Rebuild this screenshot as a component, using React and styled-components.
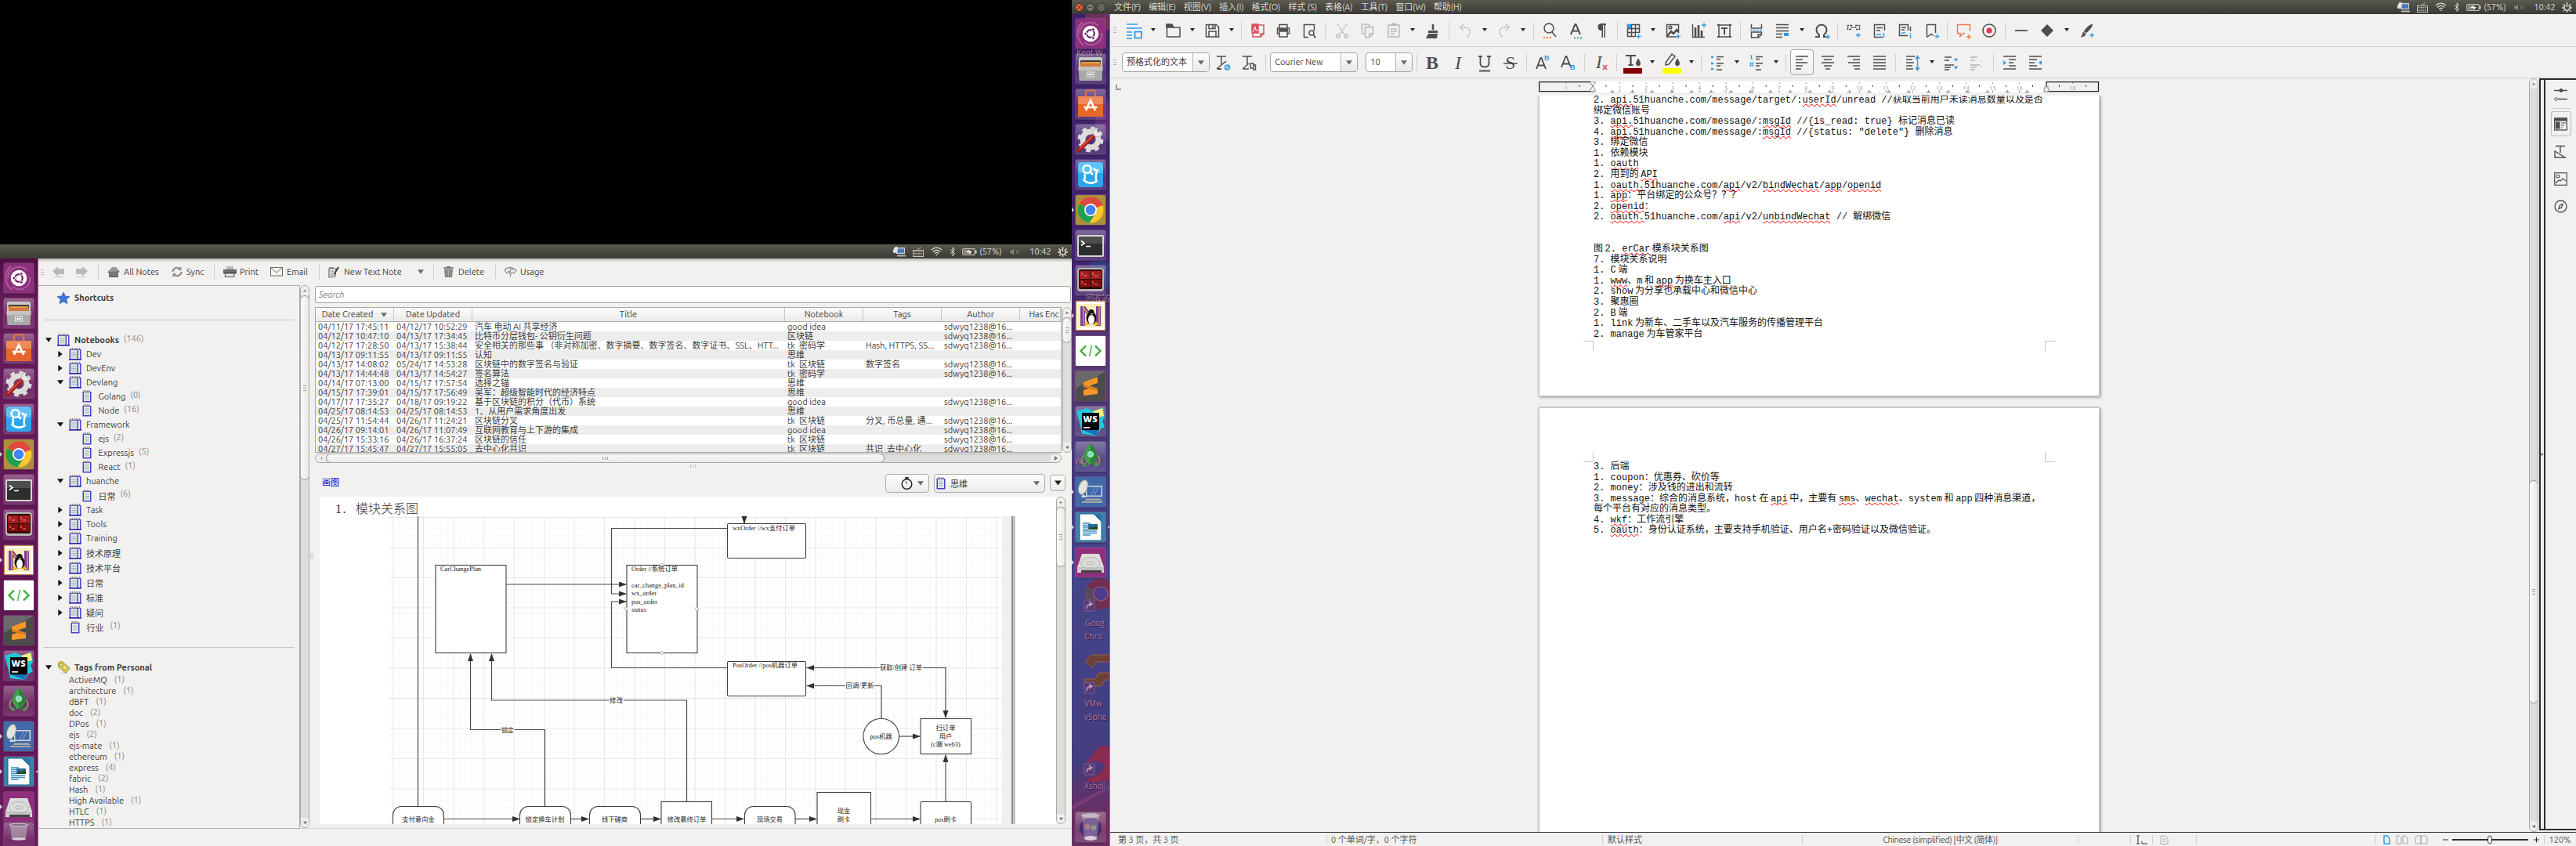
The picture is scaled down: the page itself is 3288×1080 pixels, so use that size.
import React from "react";
import styled, { createGlobalStyle, css } from "styled-components";

const UI = `Ubuntu, "Open Sans", "Noto Sans CJK SC", sans-serif`;
const MONO = `"Liberation Mono", "Noto Sans CJK SC", monospace`;
const INK = "#3c3c3c";
const BG = "#f2f1f0";

const Global = createGlobalStyle`
  html, body { margin: 0; padding: 0; background: #000; }
  * { box-sizing: border-box; }
  svg { display: block; flex: none; }
`;

/* ---------- shell ---------- */
const Root = styled.div`
  width: 3288px; height: 1080px; display: flex; overflow: hidden;
  background: #000; font-family: ${UI}; font-size: 11px; color: ${INK};
`;
const Screen = styled.div`
  width: ${p => p.$w}px; height: 1080px; flex: none; display: flex; flex-direction: column;
  padding-top: ${p => p.$top || 0}px; position: relative; overflow: hidden;
`;
const PanelBar = styled.div`
  height: ${p => p.$h}px; flex: none; display: flex; align-items: center; justify-content: space-between;
  padding: 0 2px 0 3px; color: #dfdbd2; position: relative;
  background: linear-gradient(#5c5b51, #45443e 60%, #3c3b37);
`;
const MenuRow = styled.div`display: flex; align-items: center;`;
const MenuItem = styled.span`margin-right: 10px; white-space: nowrap; line-height: 16px; letter-spacing: -0.1px;`;
const WinDot = styled.span`
  width: 11px; height: 11px; border-radius: 50%; margin-right: 3px; display: grid; place-items: center;
  background: ${p => p.$c}; border: 1px solid #35342f; margin-left: ${p => p.$ml || 0}px;
`;
const Indicators = styled.div`display: flex; align-items: center; height: 18px;`;
const Ind = styled.span`width: ${p => p.$w}px; flex: none; display: flex; align-items: center; justify-content: center; white-space: nowrap;`;
const Body = styled.div`flex: 1; min-height: 0; display: flex;`;

const TrayIcons = () => (
  <Indicators>
    <Ind $w={24}><svg width="16" height="14" viewBox="0 0 16 14"><rect x="4" y="2" width="11" height="8" fill="#ccd3dc" /><rect x="5.5" y="3.3" width="8.5" height="5.5" fill="#4a78b8" /><ellipse cx="3" cy="5" rx="2.6" ry="4.4" fill="#e3e3df" transform="rotate(25 3 5)" /><rect x="5" y="11.5" width="11" height="2" fill="#b9b9b5" /></svg></Ind>
    <Ind $w={24}><svg width="15" height="13" viewBox="0 0 15 13" fill="none" stroke="#c8c4bb"><rect x=".5" y="4.5" width="13" height="8" /><path d="M2 6.5h10M2 8.5h10M2 10.5h10" strokeDasharray="1.6 1" strokeWidth="1.2" /><path d="M6 4c0-3 4-1 4-3.5" strokeWidth=".9" /></svg></Ind>
    <Ind $w={23}><svg width="15" height="12" viewBox="0 0 15 12" fill="none" stroke="#dfdbd2" strokeWidth="1.2"><path d="M.8 4.2c4-4 9.400-4 13.400 0" /><path d="M2.900 6.500c2.800-2.700 6.400-2.700 9.200 0" /><path d="M5 8.600c1.600-1.500 3.400-1.500 5 0" /><circle cx="7.500" cy="10.300" r=".9" fill="#dfdbd2" stroke="none" /></svg></Ind>
    <Ind $w={18}><svg width="8" height="13" viewBox="0 0 8 13" fill="none" stroke="#dfdbd2"><path d="M1 3.500l5.500 5L4 11.500v-10.500l2.500 2.500L1 9" /></svg></Ind>
    <Ind $w={24}><svg width="19" height="9" viewBox="0 0 19 9"><rect x=".7" y=".7" width="15.600" height="7.600" rx="1" fill="none" stroke="#bfbbb2" strokeWidth="1.200" /><rect x="17" y="2.500" width="1.500" height="4" fill="#dfdbd2" /><rect x="2" y="2" width="9" height="5" fill="#8f8c84" /><path d="M5 5l4-3v2h4L9 7.500V5z" fill="#fff" /></svg></Ind>
    <Ind $w={31}>(57%)</Ind>
    <Ind $w={30}><svg width="13" height="9" viewBox="0 0 13 9"><path d="M0 3h2l3-2.500v8L2 6H0z" fill="#85837b" /><path d="M7.500 2.500l4.500 4.500M12 2.500L7.500 7" stroke="#85837b" /></svg></Ind>
    <Ind $w={36}>10:42</Ind>
    <Ind $w={20}><svg width="13" height="13" viewBox="0 0 13 13" fill="none" stroke="#e6e2d9"><path d="M4.300 3.600a3.700 3.700 0 1 0 4.400 0" strokeWidth="1.600" /><path d="M6.500 0v6M1.500 2.500l1.300 1.200M11.500 2.500l-1.300 1.200M0 7h2M11 7h2M2 11.500l1.300-1.300M11 11.500L9.700 10.200M6.500 11v2" strokeWidth="1.400" /></svg></Ind>
  </Indicators>
);

/* ---------- launcher ---------- */
const LauncherCol = styled.div`
  width: 49px; flex: none; display: flex; flex-direction: column; gap: 7px; padding: ${p => p.$pad}px 0 0 5px;
  position: relative; overflow: hidden;
  ${p => p.$desk
    ? css`background: linear-gradient(#3f2168, #42246e 30%, #52386f 45%, #463a80 55%, #45448a 68%, #433c80 90%, #6a2f62 96%); border-right: 1px solid #1e9bf5;`
    : css`background: linear-gradient(#4d0e42, #681b5c 8%, #601653 60%, #681b5c); border-right: 1px solid #9a6c92;`}
`;
const Tile = styled.div`
  width: 38px; height: 38px; flex: none; border-radius: 2px; position: relative;
  background: ${p => p.$bg || "linear-gradient(rgba(255,255,255,.32), rgba(255,255,255,.08) 60%, rgba(255,255,255,.14))"};
  box-shadow: 0 0 0 1px rgba(255,255,255,.13), 0 2px 0 0 rgba(0,0,0,.18);
  margin-top: ${p => p.$mt || 0}px;
`;
const Pip = styled.i`
  position: absolute; top: 16px; width: 0; height: 0; border: 3px solid transparent;
  ${p => p.$right ? css`right: -6px; border-right-color: #e9e2e8;` : css`left: -5px; border-left-color: #d8ccd6;`}
`;
const DeskLabel = styled.span`
  position: absolute; left: ${p => p.$x}px; top: ${p => p.$y}px; font: 10px/16px "Open Sans", "Noto Sans CJK SC", sans-serif;
  color: #b0788f; white-space: pre; text-shadow: 1px 1px 1px #30104a;
`;
const DeskArt = styled.svg`position: absolute; left: 0; top: 0;`;

const T = {
  ubuntu: <><rect width="38" height="38" rx="2" fill="#8d2f7b" /><path d="M5 19c0-14 16-18 24-10M33 18c2 12-12 20-22 12M9 4c-10 8-8 24 2 30" stroke="#c58aba" fill="none" strokeWidth="2" opacity=".5" /><circle cx="19" cy="19" r="10.300" fill="#fff" /><circle cx="19" cy="19" r="4.800" fill="none" stroke="#6a1d5c" strokeWidth="2.200" /><circle cx="12.700" cy="19" r="1.900" fill="#6a1d5c" stroke="#fff" /><circle cx="22.300" cy="13.500" r="1.900" fill="#6a1d5c" stroke="#fff" /><circle cx="22.300" cy="24.500" r="1.900" fill="#6a1d5c" stroke="#fff" /></>,
  files: <><path d="M4 6q0-2 2-2h26q2 0 2 2v10H4z" fill="#c9c9c7" /><rect x="6" y="8" width="26" height="10" fill="#3f3b38" /><rect x="7" y="10" width="24" height="3" fill="#e89a4c" /><rect x="6" y="12" width="26" height="5" fill="#d4793c" /><path d="M3.500 16h31l-1 18h-29z" fill="#a8a8a6" /><path d="M3.500 16h31v5h-31z" fill="#c4c4c2" /><rect x="14.500" y="23" width="9" height="6" fill="none" stroke="#eee" /><rect x="16" y="25" width="6" height="2" fill="#eee" /></>,
  soft: <><path d="M13 9V4q0-3 3-3h6q3 0 3 3v5" fill="none" stroke="#d8704c" strokeWidth="2.500" /><path d="M3 9h32v26H3z" fill="#e8662c" /><path d="M3 9h32v10H3z" fill="#ef8a58" /><path d="M13 27l6-13 6 13M10.500 23h17" stroke="#fff" strokeWidth="2.600" fill="none" /></>,
  settings: <><circle cx="19" cy="19" r="10" fill="none" stroke="#dcdcda" strokeWidth="7" /><circle cx="19" cy="19" r="14.500" fill="none" stroke="#dcdcda" strokeWidth="4" strokeDasharray="5.700 5.690" /><path d="M4 33L24 13" stroke="#a51d18" strokeWidth="5" strokeLinecap="round" /><path d="M5 31L23 13" stroke="#e4584d" strokeWidth="1.500" strokeLinecap="round" /><path d="M22 12q0-7 7-8l-2 4 3 3 4-2q0 7-8 7z" fill="#e8e8e6" stroke="#999" strokeWidth=".6" /></>,
  search: <><rect x="3" y="3" width="32" height="32" rx="4" fill="#2ba6ee" /><rect x="3" y="3" width="32" height="14" rx="4" fill="#5fc2f8" /><circle cx="14.500" cy="12" r="5" fill="none" stroke="#fff" strokeWidth="2.600" /><path d="M18 15.500l4 3.500M11 18q2 4-.500 8 3 3 7 3.500 6 .500 9-2-2-7 1-14-3 .500-4.500-3" fill="none" stroke="#fff" strokeWidth="2.600" /></>,
  chrome: <><rect width="38" height="38" rx="2" fill="#ad8f3c" /><circle cx="19" cy="19" r="16.500" fill="#fbc62f" /><path d="M19 19L4.500 11A16.500 16.500 0 0 1 34.500 13z" fill="#dd4b3e" /><path d="M19 19L4.500 11A16.500 16.500 0 0 0 17.500 35.500L25.500 23z" fill="#20a052" /><path d="M19 2.500a16.500 16.500 0 0 1 15.500 10.500H19z" fill="#dd4b3e" /><circle cx="19" cy="19" r="8" fill="#fff" /><circle cx="19" cy="19" r="6.300" fill="#4285f4" /></>,
  term: <><rect x="2" y="6" width="34" height="28" rx="2" fill="#d6d6d3" /><rect x="4" y="8" width="30" height="24" fill="#2c2f2d" /><path d="M4 8h30v9H4z" fill="#4b4e4c" /><path d="M7 13.500l4 3-4 3M13 20.500h6" stroke="#fff" fill="none" strokeWidth="1.600" /></>,
  termin: <><rect x="2" y="3" width="34" height="30" rx="4" fill="#b9b8b4" /><rect x="4" y="5" width="30" height="25" rx="2" fill="#2b0a0a" /><rect x="5" y="7" width="13.500" height="10" fill="#a91d1d" /><rect x="19.500" y="7" width="13.500" height="10" fill="#a91d1d" /><rect x="5" y="18" width="13.500" height="9.500" fill="#820d0d" /><rect x="19.500" y="18" width="13.500" height="9.500" fill="#820d0d" /><path d="M7 9l2 1.500L7 12M10 13h4M21 9l2 1.500L21 12M24 13h4M7 20l2 1.500L7 23M10 24h4M21 20l2 1.500L21 23M24 24h4" stroke="#e6a3a3" fill="none" strokeWidth=".9" /></>,
  nix: <><rect x=".5" y=".5" width="37" height="37" fill="#fff" stroke="#c87a4a" /><rect x="3" y="4" width="32" height="30" fill="#f8eebc" /><path d="M6 7h6v25H6zM26 7h6v25h-6zM6 7h6l20 25h-6z" fill="#7b3fa6" /><path d="M10 7v24M30 7v24M9 8l20 23" stroke="#d9a929" strokeWidth="1.500" fill="none" /><ellipse cx="20" cy="22" rx="6.500" ry="8" fill="#151515" /><circle cx="20" cy="14.500" r="3.500" fill="#151515" /><ellipse cx="20" cy="24" rx="4" ry="6" fill="#fff" /><path d="M18.500 16h4l-2 2zM13 27l5 3-4 1.500-3-1.500zM27 27l-5 3 4 1.500 3-1.500z" fill="#f3b41b" /></>,
  code: <><rect width="38" height="38" rx="1" fill="#fff" /><path d="M13 12.500L6.500 19l6.500 6.500M25 12.500l6.500 6.500-6.500 6.500" fill="none" stroke="#3fae3a" strokeWidth="2.400" /><path d="M20.500 12l-3 14" stroke="#4cc247" strokeWidth="1.600" /></>,
  sublime: <><rect width="38" height="38" rx="2" fill="#4b4b4b" /><path d="M0 0h38L0 22z" fill="#6a6a6a" /><path d="M10 14l18-7v8l-10 3.500 10 3.500v7L10 31v-7l8-2.500-8-2.500z" fill="#f8962a" /><path d="M10 17l18 5v3l-18-5z" fill="#d97f1e" /></>,
  ws: <><path d="M1 6L14 2l9 4 12-4 2 12-3 4 3 8-5 3-6 8-18-2-3-14z" fill="#1fc8dc" /><path d="M22 6l12-4 2 10-8 2z" fill="#f4f07c" /><path d="M4 28l22 9 4-8z" fill="#1a70b8" /><rect x="8" y="8" width="22" height="22" fill="#050505" /><text x="9.500" y="20" fontFamily="Open Sans" fontSize="11" fontWeight="800" fill="#fff" textLength="18">WS</text><rect x="10" y="26" width="8" height="1.600" fill="#fff" /></>,
  rocket: <><path d="M19 2q10 10 8 19l-5 8h-6l-5-8Q9 12 19 2z" fill="#3f9e48" /><path d="M19 2q10 10 8 19l-5 8h-3z" fill="#2e8138" /><circle cx="19" cy="16" r="3.600" fill="#7de0b8" stroke="#c6f1e0" /><path d="M10 17q-6 8 2 14M28 17q6 8-2 14" stroke="#8a8f5a" fill="none" strokeWidth="2" /><path d="M9 27l5 4M29 27l-5 4" stroke="#3f9e48" strokeWidth="2.500" /></>,
  remote: <><rect width="38" height="38" rx="2" fill="#4269a8" /><rect x="13" y="11" width="21" height="14" fill="#d3d7dc" /><rect x="14.500" y="12.500" width="18" height="11" fill="#3d67a8" /><path d="M20 23l5-10M24 23l5-10" stroke="#89a5cc" /><ellipse cx="9.500" cy="13" rx="5.500" ry="9.500" transform="rotate(20 9.500 13)" fill="#e2e2de" stroke="#999" /><path d="M9 22l-2 4h8z" fill="#dadad6" /><path d="M11 30h23l-3-2.500H14zM8 33h26v-2H8z" fill="#a9a9a6" /></>,
  writer: <><rect width="38" height="38" rx="2" fill="#3d82ac" /><path d="M5 2h18l10 10v24H5z" fill="#fcfcfc" stroke="#1d5f88" strokeWidth="1" /><path d="M23 2h10v10z" fill="#2b75a3" /><path d="M9 14h10M9 16.500h7M9 19h7M9 21.500h7M9 24h18M9 26.500h18M9 29h10" stroke="#3b8fc0" strokeWidth="1.400" /><rect x="16" y="15" width="12" height="7" fill="#2e6d9a" /><path d="M16 22l4-4 3 2 3-3 2 2v3z" fill="#28461f" /></>,
  drive: <><rect width="38" height="38" rx="2" fill="#8f2f7c" /><path d="M8 8h22l6 17v7H2v-7z" fill="#dcdcda" /><path d="M2 25h34v4H2z" fill="#c4c4c2" /><path d="M7 29h26v3H7z" fill="#434341" /><ellipse cx="19" cy="20" rx="12" ry="7.500" fill="none" stroke="#b5b5b3" /><ellipse cx="19" cy="20" rx="5" ry="2" fill="none" stroke="#b5b5b3" /></>,
  trash: <><path d="M8 3h22l-2 32q-9 3-18 0z" fill="#b9b0bc" opacity=".6" /><ellipse cx="19" cy="5" rx="12" ry="3" fill="#8c6f86" stroke="#ddd" /><ellipse cx="19" cy="33" rx="9" ry="2.500" fill="#d9d4da" /></>,
  trash2: <><ellipse cx="19" cy="20" rx="14" ry="13" fill="#4a2a72" /><path d="M12 16q4-2 6 0v6q-3-2-6 0z" fill="#a64a4a" /><path d="M20 16q4 2 6 0v6q-3 2-6 0z" fill="#5b7b55" /><path d="M8 4h22l-3 31H11z" fill="#d8cfe0" opacity=".35" /><ellipse cx="19" cy="4" rx="12" ry="3" fill="#cfc4cc" opacity=".8" /><ellipse cx="19" cy="33" rx="8" ry="3" fill="#e6dfe8" opacity=".85" /></>,
};
const APPS = ["ubuntu", "files", "soft", "settings", "search", "chrome", "term", "termin", "nix", "code", "sublime", "ws", "rocket", "remote", "writer", "drive"];
const RUNNING = ["chrome", "nix", "remote", "writer", "drive"];
const Glyph = ({ n }) => <svg width="38" height="38" viewBox="0 0 38 38">{T[n]}</svg>;

const Launcher = ({ desk, pad }) => (
  <LauncherCol $desk={desk} $pad={pad}>
    {desk && (
      <>
        <DeskArt width="49" height="1062" viewBox="0 0 49 1062">
          <rect x="17" y="0" width="32" height="20" fill="#7d3a55" opacity=".7" />
          <path d="M30 110q18-6 19 10v40q-14 4-19-20z" fill="#6a3584" opacity=".6" />
          <path d="M22 318q14-8 27 2v28H30z" fill="#33407f" opacity=".8" />
          <rect x="0" y="404" width="49" height="90" fill="#6b3d78" opacity=".45" />
          <circle cx="37" cy="740" r="20" fill="#6e3050" />
          <path d="M21 752a20 20 0 0 1-2-22l18 10z" fill="#5a4a5c" />
          <circle cx="37" cy="740" r="9" fill="#4c3a8a" stroke="#8a5a70" strokeWidth="1.500" />
          <path d="M17 826l8-8h24v9H30l-3 8zM20 858h18l4-8h7v-9H34l-4 8H16z" fill="#6c4138" stroke="#936051" />
          <path d="M17 958q14-10 26 2l-8 10-18 8q14 6 32-2v-38q-10-10-20 4z" fill="#8a2b50" />
          <path d="M16 748h13v14H16zM16 853h13v14H16zM16 957h13v14H16z" fill="#5a3a74" stroke="#8c6f9c" strokeWidth=".7" />
          <path d="M19 759q0-6 6-6m-3-3l4 3-4 3M19 864q0-6 6-6m-3-3l4 3-4 3M19 968q0-6 6-6m-3-3l4 3-4 3" stroke="#c6a5c6" fill="none" strokeWidth="1.300" />
          <path d="M0 1010L49 984v4L0 1016z" fill="#8a3f80" opacity=".6" />
        </DeskArt>
        <DeskLabel $x={6} $y={41}>Kent W</DeskLabel>
        <DeskLabel $x={18} $y={354}>回收站</DeskLabel>
        <DeskLabel $x={4} $y={562}>Wor激</DeskLabel>
        <DeskLabel $x={17} $y={769}>Goog</DeskLabel>
        <DeskLabel $x={16} $y={786}>Chro</DeskLabel>
        <DeskLabel $x={16} $y={872}>VMw</DeskLabel>
        <DeskLabel $x={16} $y={889}>vSphe</DeskLabel>
        <DeskLabel $x={16} $y={977}>Xshell</DeskLabel>
      </>
    )}
    {APPS.map(n => (
      <Tile key={n}>
        <Glyph n={n} />
        {RUNNING.includes(n) && <Pip />}
        {n === "writer" && <Pip $right />}
      </Tile>
    ))}
    {desk ? <Tile $mt={293}><Glyph n="trash2" /></Tile> : <Tile $mt={-6}><svg width="38" height="24" viewBox="0 0 38 38" preserveAspectRatio="none">{T.trash}</svg></Tile>}
  </LauncherCol>
);

/* ---------- shared widgets ---------- */
const VTrack = styled.div`
  width: 12px; flex: none; border: 1px solid #a9a7a3; border-radius: 6px; background: #dedddb;
  display: flex; flex-direction: column; align-items: center; justify-content: space-between; overflow: hidden;
`;
const VEnd = styled.div`height: ${p => p.$h || 12}px; width: 100%; flex: none; display: grid; place-items: center; background: #efeeec;`;
const VThumb = styled.div`
  flex: none; width: 12px; height: ${p => p.$h}px; margin-top: ${p => p.$mt || 0}px; border: 1px solid #9c9a96; border-radius: 6px;
  background: linear-gradient(90deg, #fbfbfa, #eae9e7); display: grid; place-items: center; margin-bottom: auto;
`;
const Tri = ({ d = "down", c = "#6b6b6b", s = 6 }) => {
  const P = { down: "M0 1h6L3 5z", up: "M0 5h6L3 1z", right: "M1 0v6l4-3z", left: "M5 0v6L1 3z" };
  return <svg width={s} height={s} viewBox="0 0 6 6"><path d={P[d]} fill={c} /></svg>;
};
const Ridges = ({ v, c = "#9d9b97" }) => (
  <svg width={v ? 9 : 5} height={v ? 5 : 9} viewBox={v ? "0 0 9 5" : "0 0 5 9"} stroke={c}>
    <path d={v ? "M1.500 0v4M4.500 0v4M7.500 0v4" : "M0 1.500h4M0 4.500h4M0 7.500h4"} />
  </svg>
);
const VScroll = ({ thumb, offset }) => (
  <VTrack>
    <VEnd><Tri d="up" s={4} /></VEnd>
    {thumb ? <VThumb $h={thumb} $mt={offset}><Ridges /></VThumb> : null}
    <VEnd><Tri d="down" s={5} /></VEnd>
  </VTrack>
);

/* ---------- NixNote ---------- */
const Nix = styled.div`flex: 1; min-width: 0; background: ${BG}; display: flex; flex-direction: column;`;
const NixToolbar = styled.div`height: 34px; flex: none; display: flex; align-items: center; padding: 0 0 0 3px; background: linear-gradient(#b6b4b0, ${BG} 5px);`;
const TIcon = styled.span`width: ${p => p.$w}px; height: 20px; flex: none; display: grid; place-items: center;`;
const TText = styled.span`width: ${p => p.$w}px; padding-left: ${p => p.$p}px; flex: none; white-space: nowrap; line-height: 16px;`;
const TSep = styled.span`width: 1px; height: 18px; margin: 0 ${p => p.$r}px 0 ${p => p.$l}px; background: #cfcdc9; flex: none;`;
const NixBody = styled.div`height: 694px; flex: none; display: flex; border-bottom: 1px solid #d2d0cd;`;
const SidePanel = styled.div`width: 334px; flex: none; height: 694px; border: 1px solid #aeaca8; border-left: 0; display: flex; flex-direction: column; overflow: hidden; padding-left: 7px;`;
const SideRow = styled.div`
  height: ${p => p.$h || 18}px; flex: none; display: flex; align-items: center; padding-left: ${p => p.$pad || 0}px; white-space: nowrap;
  font-weight: ${p => (p.$b ? 700 : 400)};
`;
const Arrow = styled.span`width: ${p => p.$w || 15}px; flex: none; display: flex; align-items: center;`;
const SideIcon = styled.span`width: ${p => p.$w || 22}px; flex: none;`;
const Count = styled.span`color: #8a8a8a; font-weight: 400; line-height: 12px; margin-left: ${p => p.$ml || 6}px; padding-bottom: ${p => p.$up ?? 5}px;`;
const Rule = styled.div`height: 1px; flex: none; background: #c6c4c1; width: 320px; margin: ${p => p.$t}px 0 ${p => p.$bt}px 0;`;
const VGrip = styled.div`width: 7px; flex: none; display: grid; place-items: center; padding-bottom: 0;`;
const NixMain = styled.div`flex: 1; min-width: 0; display: flex; flex-direction: column; padding-right: 1px;`;
const SearchBox = styled.div`height: 22px; flex: none; margin: 1px 0 0; border: 1px solid #a3a19d; border-radius: 3px; background: #fff; font-style: italic; color: #7c7c7c; padding: 2px 4px; line-height: 16px; width: 965px;`;
const TableZone = styled.div`height: 186px; margin-top: 5px; flex: none; display: flex; gap: 1px; padding-right: 1px;`;
const Table = styled.div`width: 953px; flex: none; border: 1px solid #a9a7a3; background: #fff; overflow: hidden;`;
const Cols = css`display: grid; grid-template-columns: 100px 100px 399px 100px 100px 100px 52px;`;
const THead = styled.div`${Cols} height: 18px; background: linear-gradient(#fcfcfc, #ebeae8); border-bottom: 1px solid #b3b1ad;`;
const TH = styled.div`display: flex; align-items: center; justify-content: center; gap: 10px; border-right: 1px solid #c9c7c3; white-space: nowrap; overflow: hidden; line-height: 17px;`;
const TRow = styled.div`${Cols} height: 12px; background: ${p => (p.$alt ? "#ededed" : "#fff")};`;
const TD = styled.div`padding-left: 3px; line-height: 13px; height: 13px; white-space: pre;`;
const HTrack = styled.div`height: 12px; flex: none; width: 953px; border: 1px solid #a9a7a3; border-radius: 6px; background: #dedddb; display: flex; align-items: center; margin-top: 1px; overflow: hidden;`;
const HEnd = styled.div`width: 13px; height: 12px; display: grid; place-items: center; background: #efeeec; margin-left: ${p => (p.$r ? "auto" : 0)};`;
const HThumb = styled.div`width: 713px; height: 12px; border: 1px solid #9c9a96; border-radius: 6px; background: linear-gradient(#fbfbfa, #eae9e7); display: grid; place-items: center;`;
const HGrip = styled.div`height: 8px; flex: none; display: grid; place-items: center;`;
const NoteHead = styled.div`height: 35px; flex: none; display: flex; align-items: center; padding: 0 7px 0 9px; gap: 6px;`;
const NoteTitle = styled.span`flex: 1; color: #2a2ad6; font-weight: 500; line-height: 16px; padding-bottom: 1px;`;
const Btn = styled.div`width: ${p => p.$w}px; height: ${p => p.$h || 24}px; border: 1px solid #adaba7; border-radius: 4px; background: linear-gradient(#fdfdfd, #ecebe9); display: flex; align-items: center; justify-content: ${p => p.$j || "center"}; padding: ${p => p.$p || 0}; gap: ${p => p.$g || 0}px;`;
const Grow = styled.span`flex: 1;`;
const NoteZone = styled.div`height: 418px; flex: none; display: flex; padding: 0 7px 0 6px;`;
const NoteBody = styled.div`flex: 1; min-width: 0; background: #fff; overflow: hidden;`;
const NoteLine = styled.div`height: 25px; padding: 4px 0 0 20px; font-family: "Liberation Mono", "Noto Sans CJK SC", monospace; font-weight: 300; font-size: 16px; line-height: 24px; white-space: pre; color: #333;`;
const Ordinal = styled.span`font-family: "Liberation Serif", serif; letter-spacing: 1.500px; margin-right: 11px;`;
const DiagramBox = styled.div`padding-left: 88px;`;

const BookStack = () => (
  <svg width="16" height="16" viewBox="0 0 16 16"><rect x=".5" y="2" width="15" height="13.500" fill="#5146cf" /><rect x="0" y="14" width="16" height="1.500" fill="#2f25a4" /><rect x="2" y="3" width="8.500" height="11" fill="#dfe8e4" /><rect x="12" y="3" width="2" height="11" fill="#e8f0ee" /><path d="M3 6h6.500M3 8.500h6.500M3 11h6.500" stroke="#9bb5ab" /><path d="M1.500 1.500h13" stroke="#77777f" strokeWidth="2.400" strokeDasharray="1.300 1" /></svg>
);
const Book = () => (
  <svg width="12" height="16" viewBox="0 0 12 16"><rect x=".5" y="2" width="11" height="13.500" fill="#4a40c8" /><rect x="2" y="3" width="8" height="11" fill="#e2eae7" /><path d="M3 6h6M3 8.500h6M3 11h6" stroke="#9bb5ab" /><path d="M1.500 1.500h9" stroke="#77777f" strokeWidth="2.400" strokeDasharray="1.300 1" /></svg>
);

const TREE = [
  ["Dev", "c"], ["DevEnv", "c"], ["Devlang", "o"], ["Golang", 0], ["Node", 16], ["Framework", "o"], ["ejs", 2], ["Expressjs", 5], ["React", 1],
  ["huanche", "o"], ["日常", 6], ["Task", "c"], ["Tools", "c"], ["Training", "c"], ["技术原理", "c"], ["技术平台", "c"], ["日常", "c"], ["标准", "c"], ["疑问", "c"],
];
const TAGS = [["ActiveMQ", 1], ["architecture", 1], ["dBFT", 1], ["doc", 2], ["DPos", 1], ["ejs", 2], ["ejs-mate", 1], ["ethereum", 1], ["express", 4], ["fabric", 2], ["Hash", 1], ["High Available", 1], ["HTLC", 1], ["HTTPS", 1]];
const NOTES = [
  ["04/11/17 17:45:11", "04/12/17 10:52:29", "汽车 电动 AI 共享经济", "good idea", "", 1],
  ["04/12/17 10:47:10", "04/13/17 17:34:45", "比特币分层钱包- 公钥衍生问题", "区块链", "", 1],
  ["04/12/17 17:28:50", "04/13/17 15:38:44", "安全相关的那些事 （非对称加密、数字摘要、数字签名、数字证书、SSL、HTT...", "tk  密码学", "Hash, HTTPS, SS...", 1],
  ["04/13/17 09:11:55", "04/13/17 09:11:55", "认知", "思维", "", 0],
  ["04/13/17 14:08:02", "05/24/17 14:53:28", "区块链中的数字签名与验证", "tk  区块链", "数字签名", 1],
  ["04/13/17 14:44:48", "04/13/17 14:54:27", "签名算法", "tk  密码学", "", 1],
  ["04/14/17 07:13:00", "04/15/17 17:57:54", "选择之锚", "思维", "", 0],
  ["04/15/17 17:39:01", "04/15/17 17:56:49", "吴军：超级智能时代的经济特点", "思维", "", 0],
  ["04/17/17 17:35:27", "04/18/17 09:19:22", "基于区块链的积分（代币）系统", "good idea", "", 1],
  ["04/25/17 08:14:53", "04/25/17 08:14:53", "1、从用户需求角度出发", "思维", "", 0],
  ["04/25/17 11:54:44", "04/26/17 11:24:21", "区块链分叉", "tk  区块链", "分叉, 币总量, 通...", 1],
  ["04/26/17 09:14:01", "04/26/17 11:07:49", "互联网教育与上下游的集成", "good idea", "", 1],
  ["04/26/17 15:33:16", "04/26/17 16:37:24", "区块链的信任", "tk  区块链", "", 1],
  ["04/27/17 15:45:47", "04/27/17 15:55:05", "去中心化共识", "tk  区块链", "共识  去中心化", 1],
];

const Diagram = () => {
  const L = (d, head) => <path d={d} fill="none" stroke="#4a4a4a" strokeWidth="1.200" markerEnd={head ? "url(#head)" : undefined} />;
  const box = { fill: "#fff", stroke: "#3f3f3f", strokeWidth: 1.1 };
  const Lab = ({ x, y, w, children }) => <><rect x={x - w / 2} y={y - 6} width={w} height={12} fill="#fff" /><text x={x} y={y + 3} textAnchor="middle" textLength={w - 1}>{children}</text></>;
  return (
    <svg width="801" height="393" viewBox="496 659 801 393" fontFamily='"Liberation Serif", "Noto Sans CJK SC", serif' fontSize="8.300" fill="#222">
      <defs>
        <pattern id="minor" width="7.700" height="7.700" patternUnits="userSpaceOnUse" x="501.500" y="698.500"><path d="M0 0h7.700M0 0v7.700" stroke="#f1f1f3" strokeWidth="1" /></pattern>
        <pattern id="major" width="38.500" height="38.500" patternUnits="userSpaceOnUse" x="501.500" y="698.500"><path d="M0 0h38.500M0 0v38.500" stroke="#e4e4e8" strokeWidth="1.600" /></pattern>
        <marker id="head" markerWidth="10" markerHeight="8" refX="9" refY="3.500" orient="auto-start-reverse" markerUnits="userSpaceOnUse"><path d="M0 0L10 3.500 0 7z" fill="#333" /></marker>
      </defs>
      <rect x="496" y="659" width="783" height="393" fill="#fff" />
      <rect x="496" y="659" width="783" height="393" fill="url(#minor)" />
      <rect x="496" y="659" width="783" height="393" fill="url(#major)" />
      <rect x="1279" y="659" width="12" height="393" fill="#f0f0f0" />
      <rect x="1291" y="659" width="2" height="393" fill="#8f8f8f" />
      <rect x="1293" y="659" width="3" height="393" fill="#c4c4c4" />
      {L("M533.500 659V1030")}
      {L("M950 659V668", true)}
      {L("M929 674.500H780.500V758H799", true)}
      {L("M646 746H799", true)}
      {L("M929 852.500H780.500V768H799", true)}
      {L("M695.500 1030V931.500H600.500V835", true)}
      {L("M876.500 1024V894H627.500V835", true)}
      <path d="M1030 852.500H1207V916" fill="none" stroke="#4a4a4a" strokeWidth="1.200" markerStart="url(#head)" markerEnd="url(#head)" />
      {L("M1125 917V875.500H1030", true)}
      {L("M1147 940H1174", true)}
      {L("M1207 1023V964", true)}
      {L("M566 1045.500H663", true)}{L("M728 1045.500H751", true)}{L("M817 1045.500H843", true)}{L("M908 1045.500H949", true)}{L("M1015 1045.500H1042", true)}{L("M1111 1045.500H1174", true)}
      <rect x="556" y="721.500" width="90" height="112" {...box} />
      <rect x="800" y="721.500" width="90" height="112" {...box} />
      <rect x="928.500" y="668.500" width="100" height="44" rx="1.500" {...box} />
      <rect x="928.500" y="844.500" width="100" height="44" rx="1.500" {...box} />
      <circle cx="1124.700" cy="940" r="22.800" {...box} />
      <rect x="1175" y="917.500" width="64.500" height="45" {...box} />
      <rect x="501.500" y="1029.500" width="65" height="40" rx="11" {...box} />
      <rect x="663.500" y="1029.500" width="65" height="40" rx="11" {...box} />
      <rect x="752.500" y="1029.500" width="65" height="40" rx="11" {...box} />
      <rect x="844" y="1023.500" width="64.500" height="40" {...box} />
      <rect x="950.500" y="1029.500" width="64.500" height="40" rx="11" {...box} />
      <rect x="1043" y="1011.500" width="68.500" height="50" {...box} />
      <rect x="1175" y="1023.500" width="64.500" height="40" rx="1.500" {...box} />
      <circle cx="845" cy="721.500" r="2" fill="#fff" stroke="#999" strokeWidth=".7" /><circle cx="845" cy="833.500" r="2" fill="#fff" stroke="#999" strokeWidth=".7" />
      <circle cx="799.500" cy="777" r="2" fill="#fff" stroke="#999" strokeWidth=".7" /><circle cx="889.500" cy="777" r="2" fill="#fff" stroke="#999" strokeWidth=".7" />
      <text x="562" y="729" textLength="52">CarChangePlan</text>
      <text x="806" y="729" textLength="59">Order //系统订单</text>
      <text x="806" y="749.500" textLength="67">car_change_plan_id</text>
      <text x="806" y="760" textLength="32">wx_order</text>
      <text x="806" y="770.500" textLength="33">pos_order</text>
      <text x="806" y="780.500" textLength="19">status</text>
      <text x="935" y="676.500" textLength="80">wxOrder //wx支付订单</text>
      <text x="935" y="852" textLength="83">PosOrder //pos机器订单</text>
      <Lab x={786.500} y={893.500} w={18}>修改</Lab>
      <Lab x={648} y={931.500} w={17}>锁定</Lab>
      <Lab x={1150} y={852} w={55}>获取/创建 订单</Lab>
      <Lab x={1097.500} y={875} w={37}>回调/更新</Lab>
      <g textAnchor="middle">
        <text x="1124.500" y="942.500">pos机器</text>
        <text x="1207" y="932">扫订单</text><text x="1207" y="942.500">用户</text><text x="1207" y="953">(c端 web3)</text>
        <text x="534" y="1048.500">支付意向金</text><text x="695.500" y="1048.500">锁定换车计划</text><text x="784.500" y="1048.500">线下磋商</text>
        <text x="876.500" y="1048.500">修改最终订单</text><text x="982.500" y="1048.500">现场交易</text>
        <text x="1077" y="1038">现金</text><text x="1077" y="1048.500">刷卡</text><text x="1207" y="1048.500">pos刷卡</text>
      </g>
    </svg>
  );
};

const NixNote = () => (
  <Nix>
    <NixToolbar>
      <TIcon $w={5}><Ridges c="#b9b7b3" /></TIcon>
      <TIcon $w={36}><svg width="16" height="16" viewBox="0 0 16 16"><ellipse cx="8" cy="14.500" rx="7" ry="1.300" fill="#dcdbd8" /><path d="M0 7l7-6v3h8v7H7v3z" fill="#b9b8b5" /></svg></TIcon>
      <TIcon $w={22}><svg width="16" height="16" viewBox="0 0 16 16"><ellipse cx="8" cy="14.500" rx="7" ry="1.300" fill="#dcdbd8" /><path d="M16 7L9 1v3H1v7h8v3z" fill="#b9b8b5" /></svg></TIcon>
      <TSep $l={9.5} $r={10} />
      <TIcon $w={18}><svg width="16" height="14" viewBox="0 0 16 14"><path d="M0 7.500L6 1.500h5l5 5.500-2 1v5.500H2V8.500z" fill="#777" /><path d="M1 7l5.500-6H11l4.500 5z" fill="#999" /><path d="M2 13.500h12" stroke="#555" /></svg></TIcon>
      <TText $w={64} $p={4.5}>All Notes</TText>
      <TIcon $w={16}><svg width="14" height="14" viewBox="0 0 14 14" fill="none" stroke="#8d8d8b" strokeWidth="2"><path d="M1.500 7A5.500 5 0 0 1 11 3.500M12.500 7A5.500 5 0 0 1 3 10.500" /><path d="M12.500 0v5h-5zM1.500 14V9h5z" fill="#8d8d8b" stroke="none" /></svg></TIcon>
      <TText $w={36} $p={4.5}>Sync</TText>
      <TSep $l={3.5} $r={10} />
      <TIcon $w={18}><svg width="17" height="14" viewBox="0 0 17 14"><path d="M4 0h9v4H4z" fill="#b9b9b7" /><rect y="4" width="17" height="5.500" rx="1" fill="#5a5a5a" /><path d="M1 6h15" stroke="#888" /><path d="M3 9h11v4.500H2z" fill="#e8e8e6" stroke="#555" /></svg></TIcon>
      <TText $w={42} $p={4}>Print</TText>
      <TIcon $w={18}><svg width="17" height="12" viewBox="0 0 17 12" fill="none" stroke="#6a6a6a"><rect x=".5" y=".5" width="15" height="10.500" fill="#f7f7f6" /><path d="M1 1l7 6 7-6" /></svg></TIcon>
      <TText $w={42} $p={4}>Email</TText>
      <TSep $l={2.5} $r={10} />
      <TIcon $w={16}><svg width="15" height="15" viewBox="0 0 15 15" fill="none" stroke="#666" strokeWidth="1.200"><path d="M2 3h9l-1 10-8 1z" fill="#fafafa" /><path d="M2 1.500l2 1 2-1 2 1M3.500 6h5M3.500 8.500h4M3.500 11h5" /><path d="M14 1L8.500 10" stroke="#444" strokeWidth="2.200" /></svg></TIcon>
      <TText $w={99.5} $p={5.5}>New Text Note</TText>
      <TIcon $w={8}><Tri s={8} /></TIcon>
      <TSep $l={11.5} $r={12} />
      <TIcon $w={13}><svg width="13" height="14" viewBox="0 0 13 14"><path d="M0 2h13M4 .8h5" stroke="#6e6e6e" strokeWidth="1.500" /><path d="M1 3.500h11l-1 10.500H2z" fill="#7f7f7d" /><path d="M4 4.500v8M6.500 4.500v8M9 4.500v8" stroke="#b5b5b3" strokeWidth=".9" /></svg></TIcon>
      <TText $w={53} $p={6.5}>Delete</TText>
      <TSep $l={0} $r={10} />
      <TIcon $w={17}><svg width="17" height="14" viewBox="0 0 17 14" fill="none" stroke="#8a8f98" strokeWidth="1.200"><path d="M4 9L1 5q6-7 15 0l-3 4-2-1.500M4 9l2-1.500M5 7l3-1M8.500 2v4M10 5l2-2" /><circle cx="8.500" cy="8.500" r="1.500" /><path d="M8.500 10v3.500" /></svg></TIcon>
      <TText $w={60} $p={4.5}>Usage</TText>
    </NixToolbar>
    <NixBody>
      <SidePanel>
        <SideRow $b $h={30} $pad={17}><SideIcon><svg width="16" height="15" viewBox="0 0 16 15"><path d="M8 0l2.300 5 5.700.600-4.200 3.700 1.200 5.500L8 12l-5 2.800 1.200-5.500L0 5.600 5.700 5z" fill="#3d77d6" stroke="#27509b" strokeWidth=".6" /></svg></SideIcon>Shortcuts</SideRow>
        <Rule $t={13} $bt={16} />
        <SideRow $b $pad={2}><Arrow><Tri c="#111" s={8} /></Arrow><SideIcon><BookStack /></SideIcon>Notebooks<Count>(146)</Count></SideRow>
        {TREE.map(([name, k], i) => {
          const h = /[\u4e00-\u9fff]/.test(name) ? 19 : 18;
          return typeof k === "number"
            ? <SideRow key={i} $h={h} $pad={49}><SideIcon $w={20.5}><Book /></SideIcon>{name}<Count>({k})</Count></SideRow>
            : <SideRow key={i} $h={h} $pad={17}><Arrow><Tri c="#111" d={k === "o" ? "down" : "right"} s={8} /></Arrow><SideIcon><BookStack /></SideIcon>{name}</SideRow>;
        })}
        <SideRow $h={19} $pad={34}><SideIcon $w={20.5}><Book /></SideIcon>行业<Count $ml={8}>(1)</Count></SideRow>
        <Rule $t={16} $bt={16} />
        <SideRow $b $pad={2}><Arrow><Tri c="#111" s={8} /></Arrow><SideIcon><svg width="17" height="16" viewBox="0 0 17 16"><ellipse cx="9" cy="15" rx="5" ry="1" fill="#d9d8d4" /><path d="M1 3q2-4 6-2l9 8-5 6-9-7z" fill="#d6cb54" stroke="#9c9330" /><circle cx="5" cy="4.500" r="1.600" fill="#fff" stroke="#9c9330" /><path d="M7 8l3-3 3 3-3 3z" fill="#ece59a" stroke="#aaa040" strokeWidth=".7" /></svg></SideIcon>Tags from Personal</SideRow>
        {TAGS.map(([n, c]) => <SideRow key={n} $h={14} $pad={32}>{n}<Count $ml={9} $up={2}>({c})</Count></SideRow>)}
      </SidePanel>
      <VScroll thumb={236} />
      <VGrip><Ridges c="#bdbbb7" /></VGrip>
      <NixMain>
        <SearchBox>Search</SearchBox>
        <TableZone>
          <Table>
            <THead>
              <TH>Date Created <Tri s={8} /></TH><TH>Date Updated</TH><TH>Title</TH><TH>Notebook</TH><TH>Tags</TH><TH>Author</TH>
              <TH>&nbsp;&nbsp;&nbsp;&nbsp;Has Enc</TH>
            </THead>
            {NOTES.map((r, i) => (
              <TRow key={i} $alt={i % 2}>
                <TD>{r[0]}</TD><TD>{r[1]}</TD><TD>{r[2]}</TD><TD>{r[3]}</TD><TD>{r[4]}</TD><TD>{r[5] ? "sdwyq1238@16..." : ""}</TD><TD />
              </TRow>
            ))}
          </Table>
          <VScroll thumb={33} />
        </TableZone>
        <HTrack><HEnd><Tri d="left" s={4} c="#aaa" /></HEnd><HThumb><Ridges v /></HThumb><HEnd $r><Tri d="right" s={6} /></HEnd></HTrack>
        <HGrip><Ridges v c="#c4c2be" /></HGrip>
        <NoteHead>
          <NoteTitle>画图</NoteTitle>
          <Btn $w={56} $j="flex-end" $p="0 6px 0 0" $g={6}><svg width="15" height="16" viewBox="0 0 15 16" fill="none" stroke="#222"><circle cx="7.500" cy="9" r="6.300" strokeWidth="1.500" /><path d="M7.500 0v2.500M5 1h5" strokeWidth="1.600" /><path d="M7.500 9l-1-4" strokeWidth=".8" /></svg><Tri s={8} /></Btn>
          <Btn $w={142} $p="0 6px 0 2px" $g={6}><Book />思维<Grow /><Tri s={8} /></Btn>
          <Btn $w={20} $h={21}><Tri c="#222" s={9} /></Btn>
        </NoteHead>
        <NoteZone>
          <NoteBody>
            <NoteLine><Ordinal>1.</Ordinal>模块关系图</NoteLine>
            <DiagramBox><Diagram /></DiagramBox>
          </NoteBody>
          <VScroll thumb={77} />
        </NoteZone>
      </NixMain>
    </NixBody>
  </Nix>
);

/* ---------- Writer ---------- */
const Writer = styled.div`flex: 1; min-width: 0; background: ${BG}; display: flex; flex-direction: column;`;
const WBar = styled.div`height: ${p => p.$h}px; flex: none; display: flex; align-items: center; border-bottom: 1px solid #d4d2cf; padding-left: 3px;`;
const WBtn = styled.span`
  width: 33px; height: 33px; flex: none; display: grid; place-items: center;
  opacity: ${p => (p.$off ? 0.35 : 1)};
`;
const WBtnOn = styled(WBtn)`border: 1px solid #a5a39f; border-radius: 4px; background: linear-gradient(#fff, #f0efed); width: 30px; margin: 0 1.500px;`;
const WArr = styled.span`width: 16.900px; flex: none; display: grid; place-items: center; padding-bottom: ${p => p.$up || 0}px;`;
const WSep = styled.span`width: 1px; height: 22px; flex: none; margin: 0 3.600px; background: #d3d1ce;`;
const WGap = styled.span`width: ${p => p.$w}px; flex: none;`;
const Combo = styled.div`width: ${p => p.$w}px; height: 25px; flex: none; border: 1px solid #a5a39f; border-radius: 4px; background: #fff; display: flex; align-items: stretch; overflow: hidden;`;
const ComboText = styled.span`flex: 1; padding-left: 5px; line-height: 22px; white-space: nowrap;`;
const ComboBtn = styled.span`width: 21px; border-left: 1px solid #b9b7b3; background: linear-gradient(#fdfdfd, #eae9e7); display: grid; place-items: center;`;

const K = "#4d4d4d", BL = "#2b9be8";
const G = ({ children, w = 24, ...r }) => <svg width={w} height="24" viewBox={`0 0 ${w} 24`} fill="none" stroke={K} strokeWidth="1.500" {...r}>{children}</svg>;
const plus = (x, y, c = BL) => <path d={`M${x - 3} ${y}h6M${x} ${y - 3}v6`} stroke={c} strokeWidth="1.300" />;
const Tx = ({ x, y, s, c = K, f = "Liberation Serif", b, i, children }) => <text x={x} y={y} fontSize={s} fill={c} stroke="none" fontFamily={f} fontWeight={b ? 700 : 400} fontStyle={i ? "italic" : "normal"}>{children}</text>;

const I = {
  new: <G stroke={BL}><path d="M2 4h14M2 9h20M2 14h7M2 18h7M2 22h7" /><rect x="12.500" y="13.500" width="8.500" height="8" strokeWidth="1.800" /></G>,
  open: <G><path d="M4.500 20V5h6l2 3h8.500v12z" /><path d="M4 4h7l2 4H4z" fill={K} /></G>,
  save: <G><path d="M4.500 4.500h13l3 3v12.500h-16z" /><path d="M8 4.500v5h8v-5M8 20v-7h9v7M13 5v4" /></G>,
  pdf: <G stroke="#d6525f"><path d="M12 5h8v11l-4 4H6v-4" /><rect x="5" y="4" width="8" height="11" fill="#d6525f" /><path d="M6 14l3-7 1 5 3-1" stroke="#fff" strokeWidth="1" /><path d="M16 21v-5h5" /></G>,
  print: <G><path d="M7 9V4.500h10V9M7 16H4.500V9h15v7H17" /><rect x="7" y="13" width="10" height="7" /><path d="M6 11h12" strokeWidth="3" /></G>,
  preview: <G><path d="M18.500 12V4.500h-13v16H11M18 20.500h1" /><circle cx="15" cy="15" r="3" /><path d="M17 17l3.500 4" /></G>,
  cut: <G stroke="#b9b9b7"><path d="M6 4l9 13M18 4L9 17" strokeDasharray="2 1" /><circle cx="7" cy="19" r="2" /><circle cx="17" cy="19" r="2" /></G>,
  copy: <G stroke="#b9b9b7"><path d="M8 16H4.500v-12h9V7" /><path d="M8.500 7.500h10v9l-4 4h-6zM18 16h-4v4" /></G>,
  paste: <G stroke="#b9b9b7"><rect x="5" y="5" width="14" height="15" /><path d="M8 5h8M8 10h8M8 13h8M8 16h5" /><path d="M9 4h6" strokeWidth="3" /></G>,
  brush: <G><path d="M13 4v7" strokeWidth="2.600" /><path d="M7 12h12v3H7zM7 16h12l-1 6H4z" fill={K} stroke="none" /></G>,
  undo: <G stroke="#b9b9b7"><path d="M10 4L6 8l4 4M6 8h6q6 0 6 6 0 5-5 6" strokeDasharray="3 1" /></G>,
  redo: <G stroke="#b9b9b7"><path d="M14 4l4 4-4 4M18 8h-6q-6 0-6 6 0 5 5 6" strokeDasharray="3 1" /></G>,
  find: <G><circle cx="11" cy="9" r="6" /><path d="M15 14l5 6" /><path d="M4 21h12" stroke="#f0784f" strokeWidth="2" strokeDasharray="2 2" /></G>,
  spell: <G><path d="M6 17L11.500 4h1L18 17M8 12.500h8" strokeWidth="2" /><path d="M10 21.500h11" stroke="#45a868" strokeWidth="2" strokeDasharray="2 2" /></G>,
  pil: <G><path d="M12 3h6v2h-1v16h-1.500V5H14v16h-1.500v-9q-5 0-5-4.500T12 3z" fill={K} stroke="none" /></G>,
  table: <G><path d="M4.500 4.500h15v15h-15zM4.500 9.500h15M4.500 14.500h15M9.500 4.500v15M14.500 4.500v15" /><rect x="4" y="4" width="5" height="5" fill={BL} stroke="none" /><rect x="15" y="15" width="8" height="8" fill={BG} stroke="none" />{plus(18.5, 19.5)}</G>,
  image: <G><path d="M17 20H4.500V4.500h15V15" /><path d="M5 19l5-6 3 3 4-5 2 3" strokeWidth="2.500" /><circle cx="9" cy="8" r="1.800" />{plus(19, 19.5)}</G>,
  chart: <G><path d="M4.500 4v16M4 20.500h16" /><path d="M8 8v12M12 5v15M16 12v8" strokeWidth="2.600" />{plus(19, 5)}</G>,
  tbox: <G><rect x="5" y="5" width="14" height="15" /><path d="M3 5h3M18 5h3M3 20h3M18 20h3M8 9h8M12 9v8" strokeWidth="2" /></G>,
  pbreak: <G><path d="M5.500 4v5h13V4" /><path d="M4 11.500h16" stroke={BL} strokeDasharray="2.500 1.500" /><path d="M5.500 20.500V14h13v3l-4 4H5.500zM18 17h-4v4" /></G>,
  field: <G><path d="M4 4.500h16M4 8.500h16M4 12.500h16M4 16.500h8M4 20.500h8" /><rect x="14" y="15" width="6" height="4" fill={BL} stroke="none" /></G>,
  omega: <G><path d="M4 20h5v-2.500Q5.500 15 5.500 11 6 5 12 4.500 18 5 18.500 11q0 4-3.500 6.500V20h4" strokeWidth="2" />{plus(20, 20)}</G>,
  link: <G><path d="M10 5.500H4.500v5H10M14 5.500h5.500v5H14M8.500 8h7" strokeDasharray="3 1" />{plus(18, 18)}</G>,
  foot: <G><path d="M16 20.500H5.500V4.500h13V12M8 8.500h8M8 12h5" /><path d="M8 17h6M17.500 15v6" stroke={BL} /></G>,
  endn: <G><path d="M15 18.500H4.500V4.500h11V12M18.500 7v6M7 8h6M7 11h4" /><path d="M7 15h5M18.500 15v1M18.500 17v5" stroke={BL} /></G>,
  bookm: <G><path d="M6.500 20.500v-16h11V15M6.500 20.500l5.500-4 3 2" />{plus(19.5, 19.5)}</G>,
  comment: <G stroke="#f0784f"><path d="M14 15.500h-2l-4 4v-4H4.500v-11h16V13" />{plus(19, 20, "#f0784f")}</G>,
  track: <G><circle cx="12" cy="12" r="8" /><circle cx="12" cy="12" r="3.600" fill="#dc3b4c" stroke="none" /></G>,
  line: <G><path d="M4 12h16" strokeWidth="1.800" /></G>,
  diamond: <G><path d="M12 4l8 8-8 8-8-8z" fill={K} stroke="none" /></G>,
  draw: <G><path d="M20 4q-1 5-8 11l-3-2q5-8 11-9zM8 14l3 2q0 4-6 4 2-1 3-6z" fill={K} stroke={K} strokeWidth=".6" />{plus(19, 18)}</G>,
  sty1: <G><path d="M3 4h12M9 4v10M3 20L15 10" /><path d="M4 20h5" strokeWidth="2" /><circle cx="16.500" cy="18" r="3" stroke={BL} /><path d="M14 20.500l5-5" stroke={BL} /></G>,
  sty2: <G><path d="M3 4h12M9 4v10M3 20l8-7M4 20h7M13 13h4v6h-4zM16 15h3.500v6H16" /></G>,
  bold: <G><Tx x={3} y={20} s={24} b>B</Tx></G>,
  ital: <G><Tx x={7} y={20} s={24} i>I</Tx></G>,
  under: <G><path d="M6.500 4v9q0 4.500 5.500 4.500t5.500-4.500V4M4 4h5M15 4h5M5 22.500h14" strokeWidth="1.800" /></G>,
  strike: <G><Tx x={5.5} y={20} s={23}>S</Tx><path d="M3 13h18" /></G>,
  sup: <G><path d="M4 20L9.500 6h1L16 20M6 15.500h8" strokeWidth="1.800" /><Tx x={14} y={9} s={9} c={BL} f="Liberation Sans" b>B</Tx></G>,
  sub: <G><path d="M3 18L8.500 4h1L15 18M5 13.500h8" strokeWidth="1.800" /><Tx x={14} y={21} s={9} c={BL} f="Liberation Sans" b>B</Tx></G>,
  clear: <G><Tx x={6} y={19} s={23} i>I</Tx><path d="M15 15l5 6M20 15l-5 6" stroke="#e05263" strokeWidth="1.800" /></G>,
  fcol: <svg width="26" height="30" viewBox="0 0 26 30" fill="none" stroke={K}><path d="M4 6h13M10.500 6v12M7.500 18h6" strokeWidth="2.200" /><path d="M20 10q5 8 0 9-5-1 0-9z" fill={K} /><rect x="1" y="22" width="24" height="7" fill="#850000" stroke="none" /></svg>,
  hcol: <svg width="26" height="30" viewBox="0 0 26 30" fill="none" stroke={K}><path d="M5 15L13 4l4 3-8 10-4 1z" strokeWidth="1.500" /><path d="M20 10q5 8 0 9-5-1 0-9z" fill={K} /><rect x="1" y="22" width="24" height="7" fill="#ffff00" stroke="none" /></svg>,
  bul: <G><path d="M11 4.500h9M11 7.500h5M11 13h9M11 16h5M11 21h7" /><path d="M4 5h3M4 13h3M4 20h3" stroke={BL} strokeWidth="2.500" /></G>,
  num: <G><path d="M11 4.500h9M11 7.500h5M11 13h9M11 16h5M11 21h7" /><path d="M5.500 3v4M4 3h3M4 7h3M4.500 12v4M7 12v4M3.500 12h5M3.500 16h5" stroke={BL} strokeWidth="1.200" /></G>,
  al: <G><path d="M4 4h16M4 8h9M4 12h15M4 16h9M4 20h7" /></G>,
  ac: <G><path d="M4 4h16M7 8h10M4 12h16M7 16h10M9 20h6" /></G>,
  ar: <G><path d="M4 4h16M11 8h9M5 12h15M11 16h9M13 20h7" /></G>,
  aj: <G><path d="M4 4h16M4 8h16M4 12h16M4 16h16M4 20h16" /></G>,
  space: <G><path d="M4 4h11M4 8h8M4 12h10M4 16h8M4 20h9" /><path d="M18.500 4v17M16 7l2.500-3.500L21 7M16 18l2.500 3.500L21 18" stroke={BL} /></G>,
  inc: <G><path d="M4 5h9M4 9h6M4 15h12M4 18h8M4 21h6" /><path d="M18.500 6l2 3h-4zM18.500 20l2-3h-4z" fill={BL} stroke={BL} strokeWidth=".8" /></G>,
  dec: <G stroke="#b3b3b1"><path d="M4 5h9M4 9h6M4 15h12M4 18h8M4 21h6M18 9v1M18 16v1" /></G>,
  ind1: <G><path d="M4 4h16M11 8h9M11 12h6M11 16h9M4 20h16" /><path d="M4 9l4 3-4 3z" fill={BL} stroke="none" /></G>,
  ind2: <G><path d="M4 4h16M4 8h10M4 12h7M4 16h10M4 20h16" /><path d="M20 9l-4 3 4 3z" fill={BL} stroke="none" /></G>,
};
const ROW1 = "new ^ open ^ save ^ | pdf print preview | cut copy paste ^ brush | undo ^ redo ^ | find spell pil | table ^ image chart tbox | pbreak field ^ omega | link foot endn bookm | comment track | line diamond ^ draw".split(" ");
const ROW2 = "bold ital under strike | sup sub | clear | fcol ^ hcol ^ | bul ^ num ^ | al! ac ar aj | space ^ inc dec | ind1 ind2".split(" ");
const Tools = ({ list, up }) => list.map((k, i) => {
  if (k === "^") return <WArr key={i} $up={up}><Tri c="#222" s={6} /></WArr>;
  if (k === "|") return <WSep key={i} />;
  if (k.endsWith("!")) return <WBtnOn key={i}>{I[k.slice(0, -1)]}</WBtnOn>;
  return <WBtn key={i}>{I[k]}</WBtn>;
});

const WMid = styled.div`height: 962px; flex: none; display: flex;`;
const Canvas = styled.div`flex: 1; min-width: 0; display: flex; flex-direction: column; align-items: flex-start; overflow: hidden;`;
const RulerRow = styled.div`height: 22px; flex: none; display: flex; width: 100%; padding: 4px 0 0 4px;`;
const Sheets = styled.div`flex: 1; min-height: 0; width: 100%; padding-left: 547px; overflow: hidden; display: flex; flex-direction: column; gap: 14px;`;
const Sheet = styled.div`
  width: 716px; height: ${p => p.$h}px; flex: none; background: #fff; box-shadow: 1px 1px 4px #8f8d89; border: solid #c2c0bd;
  border-width: ${p => (p.$first ? "0 1px 1px" : "1px 1px 0")}; padding: 0 56px; overflow: hidden; clip-path: ${p => (p.$first ? "inset(0 -6px -6px -6px)" : "inset(-6px -6px 0 -6px)")};
`;
const Marks = styled.div`display: flex; justify-content: space-between; padding: ${p => p.$pt || 0}px 0 0;`;
const Mark = styled.span`
  width: 13px; height: 13px; border: 0 solid #c4c4c4;
  border-${p => (p.$top ? "bottom" : "top")}-width: 1px;
  border-${p => (p.$right ? "left" : "right")}-width: 1px;
`;
const DocText = styled.div`margin: ${p => p.$mt}px 0 0 13px; font-family: ${MONO}; font-size: 12px; color: #111;`;
const Line = styled.div`height: 13.580px; line-height: 13.580px; white-space: pre;`;
const Run = styled.span`
  margin-left: ${p => (p.$gap ? 2.6 : 0)}px;
  ${p => p.$err && css`text-decoration: underline wavy #f00 1px; text-underline-offset: 1px; text-decoration-skip-ink: none;`}
`;

/* Words between tildes carry the spell-check wave; a small gap separates Han and Latin runs. */
const DocLine = ({ t }) => {
  const runs = [];
  t.split("~").forEach((seg, i) => {
    (seg.match(/[\u4e00-\u9fff]+|[^\u4e00-\u9fff]+/g) || []).forEach(s => runs.push({ s, err: i % 2 === 1 }));
  });
  const han = c => /[\u4e00-\u9fff]/.test(c), lat = c => /[A-Za-z0-9]/.test(c);
  return <Line>{runs.map((r, i) => {
    const a = i ? runs[i - 1].s.slice(-1) : "", b = r.s[0];
    return <Run key={i} $err={r.err} $gap={(han(a) && lat(b)) || (lat(a) && han(b))}>{r.s}</Run>;
  })}</Line>;
};
const DOC1 = [
  "2. ~api.~51huanche.com/message/target/:~userId~/unread //获取当前用户未读消息数量以及是否",
  "绑定微信账号",
  "3. ~api.~51huanche.com/message/:~msgId~ //{is_read: true} 标记消息已读",
  "4. ~api.~51huanche.com/message/:~msgId~ //{status: \"delete\"} 删除消息",
  "3. 绑定微信", "1. 依赖模块", "1. ~oauth~", "2. 用到的~API~",
  "1. ~oauth.~51huanche.com/~api~/v2/~bindWechat~/~app~/~openid~",
  "1. ~app~：平台绑定的公众号？？？", "2. ~openid~：",
  "2. ~oauth.~51huanche.com/~api~/v2/~unbindWechat~ // 解绑微信",
  "", "",
  "图2. ~erCar~模系块关系图", "7. 模块关系说明", "1. C端", "1. ~www~、m和~app~为换车主入口",
  "2. show为分享也承载中心和微信中心", "3. 聚惠圈", "2. B端", "1. link为新车、二手车以及汽车服务的传播管理平台", "2. manage为车管家平台",
];
const DOC2 = [
  "3. 后端", "1. coupon：优惠券、砍价等", "2. money：涉及钱的进出和流转",
  "3. message：综合的消息系统，host在~api~中，主要有~sms~、~wechat~、system和app四种消息渠道，",
  "每个平台有对应的消息类型。", "4. ~wkf~：工作流引擎", "5. ~oauth~：身份认证系统，主要支持手机验证、用户名+密码验证以及微信验证。",
];

const Ruler = () => {
  const u = 34.03, x0 = 69;
  const out = [];
  for (let i = -1; i <= 18; i++) {
    if (i !== 0) out.push(<text key={"t" + i} x={x0 + i * u} y="10.500" textAnchor="middle" fontSize="7.500" fill="#999">{Math.abs(i)}</text>);
    out.push(<path key={"h" + i} d={`M${x0 + (i + 0.5) * u} 4.500v2.500`} stroke="#444" />);
    out.push(<path key={"d" + i} d={`M${x0 + i * u} 1.500v1M${x0 + i * u} 12v1.500`} stroke="#444" />);
  }
  const tabs = [];
  for (let i = 1; i <= 22; i++) tabs.push(<path key={i} d={`M${x0 + i * 25.2 - 2.5} 13.500h5M${x0 + i * 25.2} 11v2.500`} stroke="#777" />);
  return (
    <svg width="716" height="16" viewBox="0 0 716 16" fontFamily={UI}>
      <rect x="69" y="0" width="579" height="14" fill="#fff" />
      <path d="M69 .500H.700V12.700H69M648 .500H714.500V12.700H648z" fill="none" stroke="#222" strokeWidth="1.300" />
      {out}{tabs}
      <path d="M66 0h6v2l-3 4-3-4zM66 13v-3l3-4 3 4v3zM645 13v-3l3-4 3 4v3z" fill="#f4f4f4" stroke="#777" strokeWidth=".9" />
    </svg>
  );
};
const CornerTab = styled.div`width: 543px; flex: none; padding: 4px 0 0 3px;`;
const RightRail = styled.div`
  width: 47px; height: 960px; flex: none; border: solid #2e2e2e; border-width: 2px 0 2px 2px; display: flex; margin-left: 1px;
`;
const RailGap = styled.div`width: 6px; border-right: 2px solid #2e2e2e; display: grid; place-items: center;`;
const RailCol = styled.div`flex: 1; display: flex; flex-direction: column; align-items: center; padding-top: 2px;`;
const RailBtn = styled.span`width: 26px; height: 32px; margin-bottom: 3px; display: grid; place-items: center; border-radius: 3px; border: 1px solid ${p => (p.$on ? "#bdbbb7" : "transparent")};`;
const RailRule = styled.span`width: 23px; height: 1px; background: #d0ceca; margin: -1px 0 3px;`;
const Status = styled.div`height: 18px; flex: none; border-top: 1px solid #2e2e2e; display: flex; align-items: center; line-height: 16px;`;
const SCell = styled.span`width: ${p => p.$w}px; height: 12px; flex: none; display: flex; align-items: center; justify-content: ${p => p.$c ? "center" : "flex-start"}; padding-left: ${p => p.$pl || 0}px; border-right: ${p => (p.$nb ? 0 : 1)}px solid #d0ceca; white-space: nowrap; gap: ${p => p.$gap || 0}px; color: #555; letter-spacing: ${p => p.$ls || 0}px;`;

const WriterWindow = () => (
  <Writer>
    <WBar $h={42}>
      <WGap $w={1} /><Ridges c="#b9b7b3" /><WGap $w={5} />
      <Tools list={ROW1} up={2} />
    </WBar>
    <WBar $h={40}>
      <WGap $w={1} /><Ridges c="#b9b7b3" /><WGap $w={6} />
      <Combo $w={112}><ComboText>预格式化的文本</ComboText><ComboBtn><Tri s={8} /></ComboBtn></Combo>
      <WGap $w={1} /><WBtn>{I.sty1}</WBtn><WBtn>{I.sty2}</WBtn><WSep /><WGap $w={2} />
      <Combo $w={112}><ComboText>Courier New</ComboText><ComboBtn><Tri s={8} /></ComboBtn></Combo>
      <WGap $w={10} />
      <Combo $w={60}><ComboText>10</ComboText><ComboBtn><Tri s={8} /></ComboBtn></Combo>
      <WGap $w={1} /><WSep />
      <Tools list={ROW2} up={1} />
    </WBar>
    <WMid>
      <Canvas>
        <RulerRow>
          <CornerTab><svg width="8" height="8" viewBox="0 0 8 8"><path d="M1 0v6h6" fill="none" stroke="#999" strokeWidth="2" /></svg></CornerTab>
          <Ruler />
        </RulerRow>
        <Sheets>
          <Sheet $h={384} $first>
            <DocText $mt={0}>{DOC1.map((t, i) => <DocLine key={i} t={t} />)}</DocText>
            <Marks $pt={1}><Mark /><Mark $right /></Marks>
          </Sheet>
          <Sheet $h={560}>
            <Marks $pt={56}><Mark $top /><Mark $top $right /></Marks>
            <DocText $mt={0}>{DOC2.map((t, i) => <DocLine key={i} t={t} />)}</DocText>
          </Sheet>
        </Sheets>
      </Canvas>
      <VScroll thumb={285} offset={500} />
      <RightRail>
        <RailGap><Tri d="right" c="#444" s={4} /></RailGap>
        <RailCol>
          <RailBtn><svg width="17" height="17" viewBox="0 0 17 17" fill="none" stroke={K}><path d="M0 3.500h17M5 14.500h12" strokeWidth="1.300" /><circle cx="9" cy="3.500" r="2" fill={K} /><circle cx="2.500" cy="14.500" r="1.800" /></svg></RailBtn>
          <RailRule />
          <RailBtn $on><svg width="17" height="17" viewBox="0 0 17 17" fill="none" stroke={K}><rect x=".7" y="1" width="15.600" height="15" strokeWidth="1.300" /><path d="M0 2.500h17" strokeWidth="4" /><rect x="2.500" y="6" width="4.500" height="8" fill={K} /><path d="M9 7h6M9 10h4M9 13h2" /></svg></RailBtn>
          <RailBtn><svg width="17" height="17" viewBox="0 0 17 17" fill="none" stroke={K} strokeWidth="1.400"><path d="M2 1.500h12M8 1v9M1 8v8h13z" /></svg></RailBtn>
          <RailBtn><svg width="17" height="17" viewBox="0 0 17 17" fill="none" stroke={K} strokeWidth="1.200"><rect x=".7" y=".7" width="15.600" height="15.600" /><circle cx="5" cy="5" r="2" /><path d="M2 14l4-4 2 1 3-3 4 3" /></svg></RailBtn>
          <RailBtn><svg width="17" height="17" viewBox="0 0 17 17" fill="none" stroke={K} strokeWidth="1.300"><circle cx="8.500" cy="8.500" r="7.500" /><path d="M11 5.500L9.500 10 6 11.500 7.500 7z" /></svg></RailBtn>
        </RailCol>
      </RightRail>
    </WMid>
    <Status>
      <SCell $w={277} $pl={10}>第 3 页，共 3 页</SCell>
      <SCell $w={352} $pl={5}>0 个单词/字，0 个字符</SCell>
      <SCell $w={255} $pl={6}>默认样式</SCell>
      <SCell $w={352} $c $ls={-0.45}>Chinese (simplified) [中文 (简体)]</SCell>
      <SCell $w={67} />
      <SCell $w={28} $c><svg width="16" height="12" viewBox="0 0 16 12" fill="none" stroke="#333"><path d="M1 1h4M3 1v10M1 11h4M8 8v3h7" /></svg></SCell>
      <SCell $w={56} $pl={9}><svg width="11" height="12" viewBox="0 0 11 12" fill="none" stroke="#b0aeaa"><path d="M1 1h6l3 3v7.500H1zM3 5h5M3 8h5" /></svg></SCell>
      <SCell $w={229} />
      <SCell $w={215} $pl={9} $gap={7}>
        <svg width="9" height="12" viewBox="0 0 9 12" fill="none" stroke={BL} strokeWidth="1.400"><path d="M1 1h4l3 3v7H1z" /></svg>
        <svg width="17" height="12" viewBox="0 0 17 12" fill="none" stroke="#a8a6a2"><path d="M1 1h3l3 3v7H1zM9 1h3l3 3v7H9z" /></svg>
        <svg width="17" height="12" viewBox="0 0 17 12" fill="none" stroke="#a8a6a2"><path d="M8 1v10H1V3l3-2zM8 1h5l3 2v8H8z" /></svg>
        <WGap $w={3} />
        <svg width="126" height="12" viewBox="0 0 126 12" stroke="#2e2e2e"><path d="M2 6h7M118 6h7M121.500 2.500v7" strokeWidth="1.200" /><path d="M14 6h97" strokeWidth="2" /><ellipse cx="62" cy="6" rx="2.500" ry="5" fill="#f5f5f5" /></svg>
      </SCell>
      <SCell $w={39} $c $nb>120%</SCell>
    </Status>
  </Writer>
);

export default function App() {
  return (
    <>
      <Global />
      <Root>
        <Screen $w={1368} $top={312}>
          <PanelBar $h={18}><span /><TrayIcons /></PanelBar>
          <Body><Launcher pad={6} /><NixNote /></Body>
        </Screen>
        <Screen $w={1920}>
          <PanelBar $h={18}>
            <MenuRow>
              <WinDot $c="#e9603a" $ml={1}><svg width="5" height="5" viewBox="0 0 5 5"><path d="M0 0l5 5M5 0L0 5" stroke="#4a2215" /></svg></WinDot>
              <WinDot $c="#787670"><svg width="5" height="5" viewBox="0 0 5 5"><path d="M0 2.500h5" stroke="#45443f" /></svg></WinDot>
              <WinDot $c="#787670"><svg width="5" height="5" viewBox="0 0 5 5"><rect x=".5" y=".5" width="4" height="4" fill="none" stroke="#45443f" /></svg></WinDot>
              <WGap $w={8} />
              {["文件(F)", "编辑(E)", "视图(V)", "插入(I)", "格式(O)", "样式 (S)", "表格(A)", "工具(T)", "窗口(W)", "帮助(H)"].map(m => <MenuItem key={m}>{m}</MenuItem>)}
            </MenuRow>
            <TrayIcons />
          </PanelBar>
          <Body><Launcher desk pad={6} /><WriterWindow /></Body>
        </Screen>
      </Root>
    </>
  );
}
